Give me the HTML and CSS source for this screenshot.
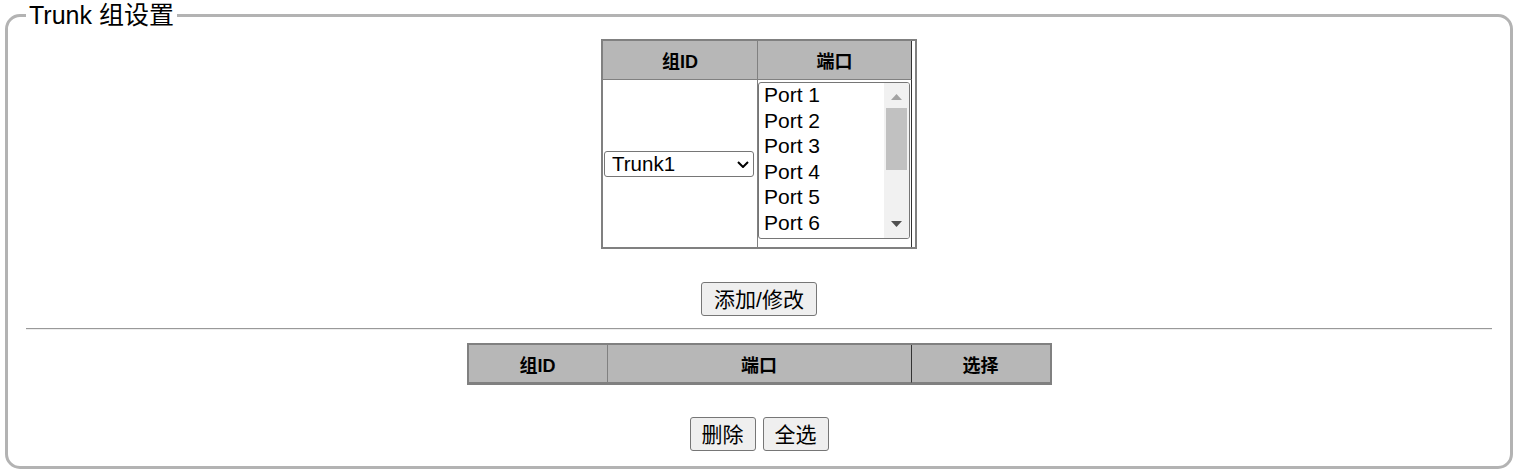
FILE: index.html
```html
<!DOCTYPE html>
<html lang="zh-CN">
<head>
    <meta charset="UTF-8">
    <title>Trunk 组设置</title>
    <link rel="stylesheet" href="styles.css">
</head>
<body>
<fieldset class="panel">
    <legend>Trunk 组设置</legend>

    <table class="grid edit">
        <tr>
            <th class="c-id">组ID</th>
            <th class="c-port">端口</th>
            <td class="c-end"></td>
        </tr>
        <tr>
            <td class="c-id">
                <div class="dropdown">
                    <select name="trunk">
                        <option>Trunk1</option>
                        <option>Trunk2</option>
                        <option>Trunk3</option>
                        <option>Trunk4</option>
                    </select>
                    <svg class="chevron" width="12" height="7" viewBox="0 0 12 7"><polyline points="1,1 6,6 11,1" fill="none" stroke="#000" stroke-width="2"/></svg>
                </div>
            </td>
            <td class="c-port">
                <div class="listbox">
                    <div class="options">
                        <div>Port 1</div>
                        <div>Port 2</div>
                        <div>Port 3</div>
                        <div>Port 4</div>
                        <div>Port 5</div>
                        <div>Port 6</div>
                    </div>
                    <div class="scrollbar">
                        <div class="sb-btn up">
                            <svg width="11" height="6" viewBox="0 0 11 6"><polygon points="0,6 5.5,0 11,6" fill="#a3a3a3"/></svg>
                        </div>
                        <div class="thumb"></div>
                        <div class="track"></div>
                        <div class="sb-btn down">
                            <svg width="11" height="6" viewBox="0 0 11 6"><polygon points="0,0 11,0 5.5,6" fill="#505050"/></svg>
                        </div>
                    </div>
                </div>
            </td>
            <td class="c-end"></td>
        </tr>
    </table>

    <div class="actions first">
        <button type="button">添加/修改</button>
    </div>

    <hr>

    <table class="grid list">
        <tr>
            <th class="c-id">组ID</th>
            <th class="c-port">端口</th>
            <th class="c-sel">选择</th>
        </tr>
    </table>

    <div class="actions last">
        <button type="button">删除</button>
        <button type="button">全选</button>
    </div>
</fieldset>
</body>
</html>
```

FILE: styles.css
```css
body {
    margin: 0;
    font-family: "Liberation Sans", "Noto Sans CJK SC", sans-serif;
    color: #000;
}

.panel {
    margin: 0 5px;
    min-width: 0;
    border: 3px solid #b3b3b3;
    border-radius: 15px;
    padding: 9px 18px 15px 18px;
}

.panel legend {
    font-size: 25px;
    line-height: 30px;
    padding: 0 3px;
}

.grid {
    border-collapse: separate;
    border-spacing: 0;
    border: 2px solid #808080;
    margin: 0 auto;
}

.grid th {
    background-color: #b7b7b7;
    font-size: 18px;
    font-weight: bold;
    padding: 0;
    height: 38px;
    border-bottom: 1px solid #808080;
}

.grid td {
    padding: 0;
}

.grid .c-id {
    border-right: 1px solid #808080;
}

.grid .c-port {
    border-right: 1px solid #333;
}

/* top table */
.edit .c-id {
    width: 153px;
}

.edit .c-port {
    width: 153px;
}

.edit .c-end {
    width: 3px;
}

.edit td {
    height: 167px;
}

.edit td.c-id {
    vertical-align: middle;
    padding-left: 1px;
}

.edit td.c-port {
    vertical-align: top;
}

.edit th + .c-end {
    height: 38px;
}

.dropdown {
    position: relative;
    width: 150px;
}

.dropdown select {
    -webkit-appearance: none;
    appearance: none;
    width: 150px;
    height: 26px;
    font-family: inherit;
    font-size: 20.5px;
    color: #000;
    background-color: #fff;
    border: 1px solid #767676;
    border-radius: 3px;
    padding: 0 0 0 7px;
    display: block;
    outline: none;
}

.dropdown .chevron {
    position: absolute;
    right: 5px;
    top: 10px;
    pointer-events: none;
}

.listbox {
    width: 152px;
    height: 157px;
    box-sizing: border-box;
    margin-top: 2px;
    border: 1px solid #767676;
    border-radius: 3px;
    display: flex;
    overflow: hidden;
}

.options {
    flex: 1;
    margin-top: -1px;
    padding-left: 5px;
    font-size: 21px;
    line-height: 25.5px;
    white-space: nowrap;
}

.scrollbar {
    width: 25px;
    background-color: #f1f1f1;
    display: flex;
    flex-direction: column;
}

.sb-btn {
    height: 25px;
    box-sizing: border-box;
    display: flex;
    justify-content: center;
}

.sb-btn svg {
    display: block;
}

.sb-btn.up {
    padding-top: 11px;
}

.sb-btn.down {
    padding-top: 8px;
}

.thumb {
    height: 62px;
    margin: 0 2px;
    background-color: #c1c1c1;
}

.track {
    flex: 1;
}

/* bottom table */
.list th {
    height: 37px;
}

.list .c-id {
    width: 138px;
}

.list .c-port {
    width: 303px;
}

.list .c-sel {
    width: 138px;
}

.actions {
    display: flex;
    justify-content: center;
    gap: 7px;
}

.actions.first {
    margin-top: 33px;
}

.actions.last {
    margin-top: 32px;
}

.actions button {
    height: 34px;
    padding: 0 11px 3px 11px;
    font-family: inherit;
    font-size: 21px;
    color: #000;
    background-color: #efefef;
    border: 1px solid #767676;
    border-radius: 3px;
}

.actions.first button {
    padding: 0 12px 3px 12px;
}

hr {
    height: 0;
    border: 0;
    border-top: 1px solid #999;
    border-bottom: 1px solid #eee;
    margin: 12px 0 13px 0;
}
```
